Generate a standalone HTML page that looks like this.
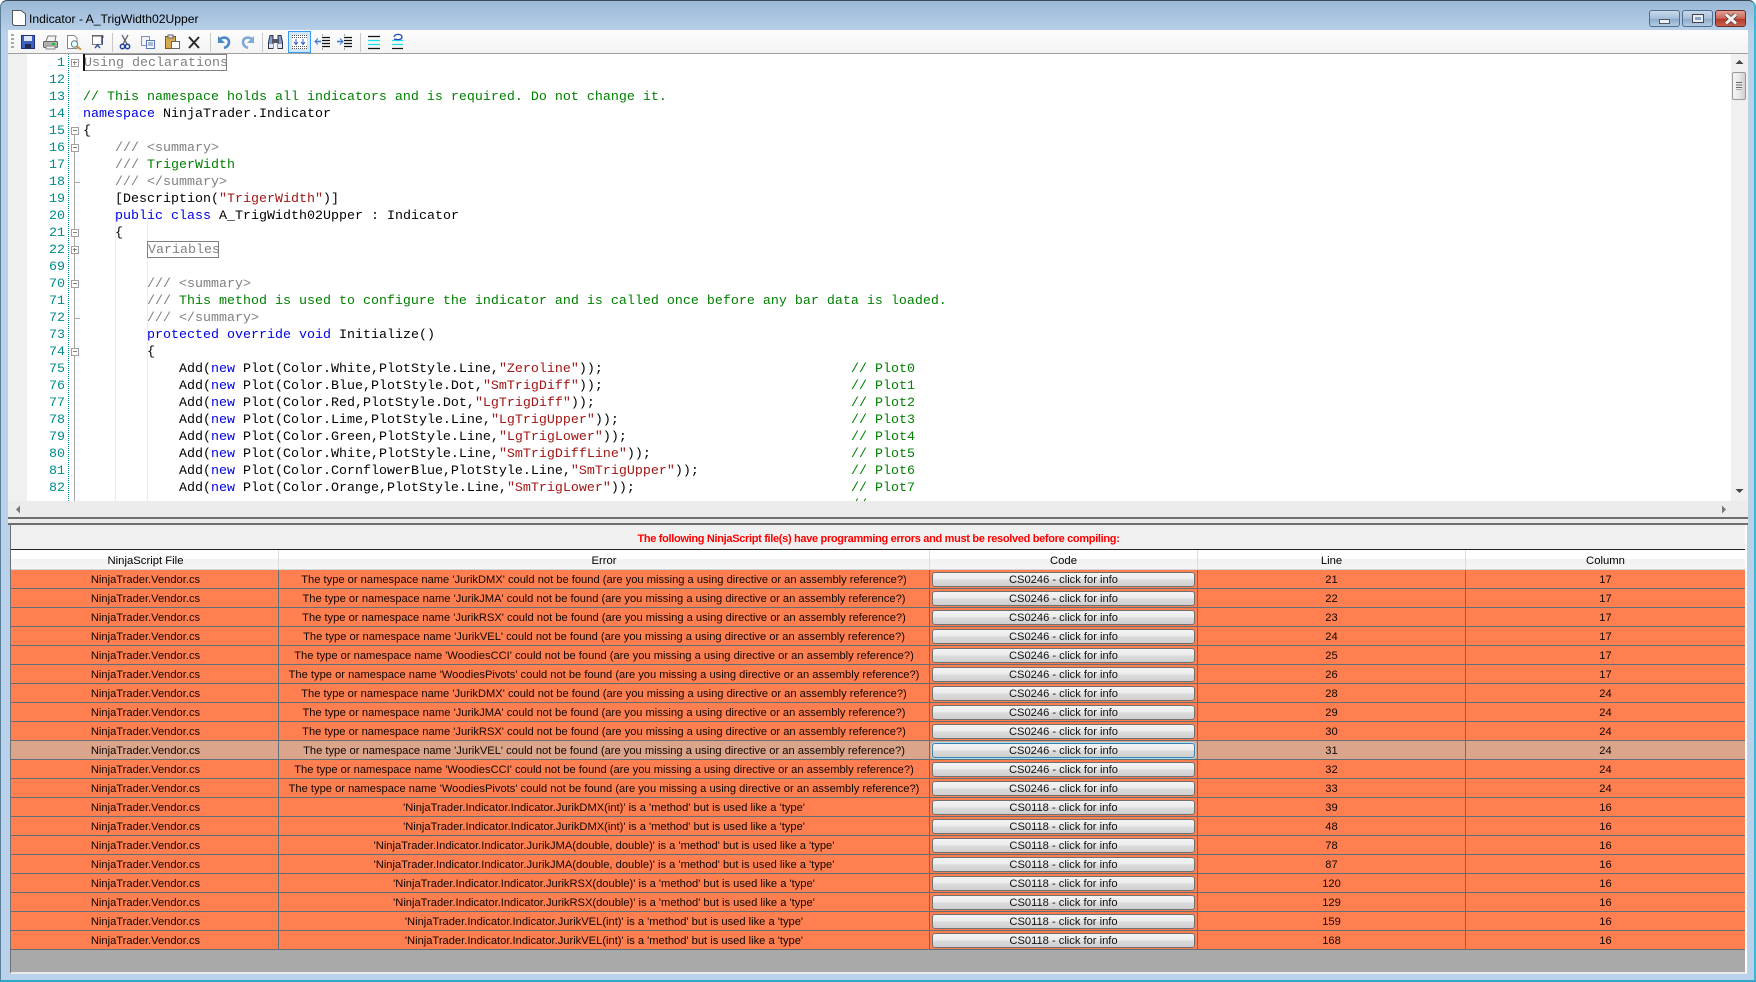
<!DOCTYPE html>
<html><head><meta charset="utf-8"><title>Indicator - A_TrigWidth02Upper</title>
<style>
html,body{margin:0;padding:0;width:1756px;height:982px;overflow:hidden;background:#fff}
*{box-sizing:border-box}
.a{position:absolute}
#win{position:absolute;left:0;top:0;width:1756px;height:982px;background:linear-gradient(#9ab8d6 0,#b9d1ea 32px,#b9d1ea 100%);border:1px solid #2f4a58;border-right:2px solid #3fb4d4;border-bottom:2px solid #2fa8c8;border-left-color:#5b7f98;border-top-color:#3a4a58;border-radius:7px 7px 0 0}
#title{position:absolute;left:29px;top:12px;font:12.15px/15px "Liberation Sans",sans-serif;color:#000}
#tb{position:absolute;left:8px;top:30px;width:1740px;height:24px;background:linear-gradient(#fdfdfd,#f3f3f3);border-bottom:1px solid #a0a0a0}
#code{position:absolute;left:8px;top:54px;width:1723px;height:447px;background:#fff;overflow:hidden}
#gut{position:absolute;left:0;top:0;width:19px;height:447px;background:#f0f0f0}
.l{position:absolute;left:75px;height:17px;margin-top:1px;white-space:pre;font:13.33px/17px "Liberation Mono",monospace;color:#000}
.n{position:absolute;left:20px;width:37px;text-align:right;height:17px;margin-top:1px;font:13.33px/17px "Liberation Mono",monospace;color:#008b8b}
.k{color:#0000e6}.c{color:#008000}.g{color:#808080}.s{color:#a31515}
.fb{position:absolute;left:63px;width:8px;height:8px;margin-top:1px;border:1px solid #a0a0a0;background:#fff}
.fb:before{content:"";position:absolute;left:1px;top:2px;width:4px;height:1px;background:#808080}
.p:after{content:"";position:absolute;left:2px;top:1px;width:1px;height:4px;background:#808080}
.box{position:absolute;border:1px solid #808080;height:17px;font:13.33px/15px "Liberation Mono",monospace;color:#808080;white-space:pre;padding:1px 0 0 0;overflow:hidden}
#vs{position:absolute;left:1731px;top:54px;width:17px;height:447px;background:#f0f0f0}
#hs{position:absolute;left:8px;top:501px;width:1740px;height:17px;background:#ececec}
#sp{position:absolute;left:8px;top:517px;width:1740px;height:8px;background:#ececec;border-top:2px solid #6e6e6e;border-bottom:2px solid #6e6e6e}
#pan{position:absolute;left:10px;top:525px;width:1737px;height:449px;background:#f0f0f0;border-left:1px solid #707070;border-right:2px solid #fff;border-bottom:2px solid #e8e8e8}
#msg{position:absolute;left:0;width:1735px;text-align:center;top:5px;font:bold 11px/15px "Liberation Sans",sans-serif;color:#f00;letter-spacing:-.32px;margin-top:2px}
#grid{position:absolute;left:11px;top:549px;width:1734px;height:423px;background:#a9a9a9;border-top:1px solid #222}
.h{position:absolute;top:0;height:20px;background:linear-gradient(#fff 0,#fff 45%,#f0f1f2 50%,#f5f5f5 100%);border-right:1px solid #dcdcdc;border-bottom:1px solid #d5d5d5;text-align:center;font:11.3px/22px "Liberation Sans",sans-serif;color:#000}
.r{position:absolute;left:0;width:1734px;height:19px;background:#ff7f50;border-bottom:1px solid #607078;font:11.15px/21px "Liberation Sans",sans-serif;color:#120600}
.r.sel{background:#dba58c}
.r i{position:absolute;top:0;font-style:normal;text-align:center;white-space:nowrap;border-right:1px solid #607078;height:19px}
.r i.f{left:0;width:268px;padding-left:2px}
.r i.e{left:268px;width:651px}
.r i.b{left:919px;width:268px}
.r i.ln{left:1187px;width:268px}
.r i.co{left:1455px;width:279px;border:0}
.r u{position:absolute;left:2px;top:2px;width:263px;height:15px;text-decoration:none;border:1px solid #707070;border-radius:3px;background:linear-gradient(#f4f4f4,#ebebeb 48%,#dcdcdc 52%,#cfcfcf);line-height:15px;color:#111}
.r.sel u{border-color:#3c7fb1;box-shadow:0 0 0 1px #a8e0f0}
.sep{position:absolute;top:33px;width:1px;height:19px;background:#c8c8c8}
.wb{position:absolute;top:10px;height:17px;border:1px solid #4f6d8c;border-radius:3px}
</style></head><body>
<div id="win"></div>
<svg class="a" style="left:11px;top:9px" width="16" height="18" viewBox="0 0 16 18"><path d="M1.5 1.5H10L14.5 5V16.5H3L1.5 15Z" fill="#fff" stroke="#555"/></svg>
<div id="title">Indicator - A_TrigWidth02Upper</div>
<div class="wb" style="left:1649px;width:31px;background:linear-gradient(#c9d9ea,#a6bfd9 50%,#8eaccc 55%,#b4cbe3)"><div class="a" style="left:9px;top:8px;width:11px;height:5px;background:#eef2f6;border:1px solid #4a5a6a"></div></div>
<div class="wb" style="left:1682px;width:31px;background:linear-gradient(#c9d9ea,#a6bfd9 50%,#8eaccc 55%,#b4cbe3)"><div class="a" style="left:9px;top:3px;width:12px;height:9px;background:#e8eef4;border:1px solid #445"><div class="a" style="left:2px;top:2px;width:6px;height:3px;background:#8aa4c0"></div></div></div>
<div class="wb" style="left:1715px;width:31px;border-color:#6b2b2b;background:linear-gradient(#e0a094,#cc6a5a 48%,#b83a2a 55%,#c8604c)"><svg class="a" style="left:8px;top:2px" width="14" height="12" viewBox="0 0 14 12"><path d="M2 1.5L12 10.5M12 1.5L2 10.5" stroke="#4a3a3a" stroke-width="4.4"/><path d="M2 1.5L12 10.5M12 1.5L2 10.5" stroke="#f4f0f0" stroke-width="3"/></svg></div>

<div id="tb"></div>
<div class="a" style="left:11px;top:34px;width:3px;height:16px;background:repeating-linear-gradient(#a8a8a8 0,#a8a8a8 2px,#f8f8f8 2px,#f8f8f8 4px)"></div>
<svg class="a" style="left:0;top:30px" width="420" height="24" viewBox="0 30 420 24" fill="none">
<!-- save -->
<rect x="21.5" y="35.5" width="13" height="13" fill="#4060c0" stroke="#20307a"/><rect x="24" y="36" width="8" height="5" fill="#dfe6f8"/><rect x="25" y="44" width="6" height="4" fill="#202a50"/>
<!-- print -->
<path d="M46 41L48 36H56L55 41" fill="#f4f4f4" stroke="#777"/><rect x="43.5" y="41.5" width="14" height="6" rx="1" fill="#b0b0b0" stroke="#666"/><rect x="46" y="46" width="9" height="3" fill="#eee" stroke="#888"/><rect x="52" y="43" width="3" height="2" fill="#22bb33"/>
<!-- preview -->
<path d="M67.5 35.5H74L77 38V48.5H67.5Z" fill="#fff" stroke="#888"/><circle cx="74.5" cy="44" r="3.2" fill="#dff" stroke="#777"/><path d="M77 46.5L81 49.5" stroke="#d09030" stroke-width="2"/>
<!-- presentation -->
<rect x="92.5" y="35.5" width="10" height="9" fill="#fff" stroke="#777"/><path d="M92 36H103V38" stroke="#555"/><path d="M95 48L97.5 45L100 48" stroke="#3050a0" stroke-width="1.4"/><path d="M102 36V44" stroke="#2a3a90" stroke-width="1.4"/>
<!-- cut -->
<path d="M122 35L127 44M128 35L123 44" stroke="#667" stroke-width="1.3"/><circle cx="122.5" cy="46.5" r="2.2" stroke="#2040a0" stroke-width="1.5"/><circle cx="127.5" cy="46.5" r="2.2" stroke="#2040a0" stroke-width="1.5"/>
<!-- copy -->
<rect x="141.5" y="36.5" width="8" height="9" fill="#eef3fb" stroke="#7a94bc"/><rect x="146.5" y="40.5" width="8" height="8" fill="#f4f8ff" stroke="#5a78b0"/><path d="M148 43H153M148 45H153" stroke="#5a78b0"/>
<!-- paste -->
<rect x="165.5" y="36.5" width="10" height="12" fill="#d8aa50" stroke="#7a5a20"/><rect x="168" y="35" width="5" height="3" fill="#e8e8e8" stroke="#666"/><rect x="171.5" y="41.5" width="8" height="7" fill="#fff" stroke="#666"/>
<!-- delete -->
<path d="M189 37L199 48M199 37L189 48" stroke="#2a2a2a" stroke-width="2"/>
<!-- undo -->
<path d="M220 39C224 36 229 38 229 42C229 45 227 47 224 48" stroke="#4a88cc" stroke-width="2.6"/><path d="M218 36V43H225Z" fill="#4a88cc"/>
<!-- redo -->
<path d="M252 39C248 36 243 38 243 42C243 45 245 47 248 48" stroke="#80a8d8" stroke-width="2.6"/><path d="M254 36V43H247Z" fill="#80a8d8"/>
<!-- find -->
<path d="M268.5 48.5V42L270 35.5H273V48.5ZM282.5 48.5V42L281 35.5H278V48.5Z" fill="#7f9fd0" stroke="#334"/><rect x="272" y="39" width="7" height="4" fill="#556"/><rect x="269" y="44" width="4" height="4" fill="#dfe8f8"/><rect x="278" y="44" width="4" height="4" fill="#dfe8f8"/>
<!-- active -->
<rect x="288.5" y="31.5" width="22" height="21" fill="#cfe6fb" stroke="#3a9af0"/><rect x="292" y="35" width="15" height="14" fill="#fff"/><path d="M292 35.5H307M292 37.5H307M292 46.5H307M292 48.5H307" stroke="#555" stroke-dasharray="1 1"/><path d="M296 39V44M294 42L296 44.5L298 42M303 39V44M301 42L303 44.5L305 42" stroke="#2a58c0"/>
<!-- outdent -->
<path d="M322 37.5H330M322 40.5H330M322 43.5H330M322 46.5H330" stroke="#111" stroke-width="1.2"/><path d="M322 35H323M322 49H323" stroke="#555"/><path d="M315 41.5H321" stroke="#3878d8" stroke-width="1.6"/><path d="M318 38.5L315 41.5L318 44.5" stroke="#3878d8"/>
<!-- indent -->
<path d="M344 37.5H352M344 40.5H352M344 43.5H352M344 46.5H352" stroke="#111" stroke-width="1.2"/><path d="M344 35H345M344 49H345" stroke="#555"/><path d="M337 41.5H343" stroke="#3878d8" stroke-width="1.6"/><path d="M340 38.5L343 41.5L340 44.5" stroke="#3878d8"/>
<!-- lines -->
<path d="M368 36.5H380M368 48.5H380" stroke="#111" stroke-width="1.2"/><path d="M368 40.5H380M368 44.5H380" stroke="#20e0e8" stroke-width="1.2"/>
<path d="M392 48.5H403" stroke="#111" stroke-width="1.2"/><path d="M392 44.5H403M392 40.5H403" stroke="#20e0e8" stroke-width="1.2"/><path d="M394 37C395 33.5 402 33.5 402 37C402 40 397 40 394 39" stroke="#2040c0" stroke-width="1.3"/>
</svg>
<div class="sep" style="left:112px"></div><div class="sep" style="left:210px"></div><div class="sep" style="left:262px"></div><div class="sep" style="left:360px"></div>

<div id="code">
<div id="gut"></div>
<div class="a" style="left:60px;top:0;height:447px;border-left:1px dotted #008b8b"></div>
<div class="a" style="left:66px;top:80px;height:367px;width:1px;background:#a8a8a8"></div>
<div class="a" style="left:107px;top:160px;height:287px;width:1px;background:#ececec"></div>
<div class="a" style="left:139px;top:160px;height:287px;width:1px;background:#ececec"></div>

<div class="n" style="top:0">1</div><div class="fb p" style="top:4px"></div>
<div class="box" style="left:75px;top:0;width:144px">Using declarations</div>
<div class="a" style="left:75px;top:0;width:2px;height:17px;background:#111"></div>
<div class="n" style="top:17px">12</div>
<div class="n" style="top:34px">13</div><div class="l c" style="top:34px">// This namespace holds all indicators and is required. Do not change it.</div>
<div class="n" style="top:51px">14</div><div class="l" style="top:51px"><span class="k">namespace</span> NinjaTrader.Indicator</div>
<div class="n" style="top:68px">15</div><div class="fb" style="top:72px"></div><div class="l" style="top:68px">{</div>
<div class="n" style="top:85px">16</div><div class="fb" style="top:89px"></div><div class="l g" style="top:85px">    /// &lt;summary&gt;</div>
<div class="n" style="top:102px">17</div><div class="l" style="top:102px"><span class="g">    /// </span><span class="c">TrigerWidth</span></div>
<div class="n" style="top:119px">18</div><div class="a" style="left:66px;top:128px;width:6px;height:1px;background:#a8a8a8"></div><div class="l g" style="top:119px">    /// &lt;/summary&gt;</div>
<div class="n" style="top:136px">19</div><div class="l" style="top:136px">    [Description(<span class="s">"TrigerWidth"</span>)]</div>
<div class="n" style="top:153px">20</div><div class="l" style="top:153px">    <span class="k">public</span> <span class="k">class</span> A_TrigWidth02Upper : Indicator</div>
<div class="n" style="top:170px">21</div><div class="fb" style="top:174px"></div><div class="l" style="top:170px">    {</div>
<div class="n" style="top:187px">22</div><div class="fb p" style="top:191px"></div>
<div class="box" style="left:139px;top:187px;width:72px">Variables</div>
<div class="n" style="top:204px">69</div>
<div class="n" style="top:221px">70</div><div class="fb" style="top:225px"></div><div class="l g" style="top:221px">        /// &lt;summary&gt;</div>
<div class="n" style="top:238px">71</div><div class="l" style="top:238px"><span class="g">        /// </span><span class="c">This method is used to configure the indicator and is called once before any bar data is loaded.</span></div>
<div class="n" style="top:255px">72</div><div class="a" style="left:66px;top:264px;width:6px;height:1px;background:#a8a8a8"></div><div class="l g" style="top:255px">        /// &lt;/summary&gt;</div>
<div class="n" style="top:272px">73</div><div class="l" style="top:272px">        <span class="k">protected</span> <span class="k">override</span> <span class="k">void</span> Initialize()</div>
<div class="n" style="top:289px">74</div><div class="fb" style="top:293px"></div><div class="l" style="top:289px">        {</div>
<div class="n" style="top:306px">75</div><div class="l" style="top:306px">            Add(<span class="k">new</span> Plot(Color.White,PlotStyle.Line,<span class="s">"Zeroline"</span>));</div><div class="l c" style="left:843px;top:306px">// Plot0</div>
<div class="n" style="top:323px">76</div><div class="l" style="top:323px">            Add(<span class="k">new</span> Plot(Color.Blue,PlotStyle.Dot,<span class="s">"SmTrigDiff"</span>));</div><div class="l c" style="left:843px;top:323px">// Plot1</div>
<div class="n" style="top:340px">77</div><div class="l" style="top:340px">            Add(<span class="k">new</span> Plot(Color.Red,PlotStyle.Dot,<span class="s">"LgTrigDiff"</span>));</div><div class="l c" style="left:843px;top:340px">// Plot2</div>
<div class="n" style="top:357px">78</div><div class="l" style="top:357px">            Add(<span class="k">new</span> Plot(Color.Lime,PlotStyle.Line,<span class="s">"LgTrigUpper"</span>));</div><div class="l c" style="left:843px;top:357px">// Plot3</div>
<div class="n" style="top:374px">79</div><div class="l" style="top:374px">            Add(<span class="k">new</span> Plot(Color.Green,PlotStyle.Line,<span class="s">"LgTrigLower"</span>));</div><div class="l c" style="left:843px;top:374px">// Plot4</div>
<div class="n" style="top:391px">80</div><div class="l" style="top:391px">            Add(<span class="k">new</span> Plot(Color.White,PlotStyle.Line,<span class="s">"SmTrigDiffLine"</span>));</div><div class="l c" style="left:843px;top:391px">// Plot5</div>
<div class="n" style="top:408px">81</div><div class="l" style="top:408px">            Add(<span class="k">new</span> Plot(Color.CornflowerBlue,PlotStyle.Line,<span class="s">"SmTrigUpper"</span>));</div><div class="l c" style="left:843px;top:408px">// Plot6</div>
<div class="n" style="top:425px">82</div><div class="l" style="top:425px">            Add(<span class="k">new</span> Plot(Color.Orange,PlotStyle.Line,<span class="s">"SmTrigLower"</span>));</div><div class="l c" style="left:843px;top:425px">// Plot7</div>
<div class="l c" style="left:843px;top:442px">//</div>
</div>

<div id="vs">
<svg class="a" style="left:3px;top:5px" width="11" height="6"><path d="M1.5 5L5.5 1L9.5 5Z" fill="#444"/></svg>
<div class="a" style="left:1px;top:18px;width:14px;height:28px;border:1px solid #9a9a9a;border-radius:2px;background:linear-gradient(90deg,#f4f4f4,#e8e8e8 50%,#cfcfcf)"><div class="a" style="left:3px;top:9px;width:6px;height:8px;background:repeating-linear-gradient(#666 0,#666 1px,#eee 1px,#eee 2.5px)"></div></div>
<svg class="a" style="left:3px;top:434px" width="11" height="6"><path d="M1.5 1L5.5 5L9.5 1Z" fill="#444"/></svg>
</div>
<div id="hs">
<svg class="a" style="left:7px;top:4px" width="6" height="9"><path d="M5 0.5L1 4.5L5 8.5Z" fill="#777"/></svg>
<svg class="a" style="left:1713px;top:4px" width="6" height="9"><path d="M1 0.5L5 4.5L1 8.5Z" fill="#777"/></svg>
</div>
<div id="sp"></div>
<div id="pan"><div id="msg">The following NinjaScript file(s) have programming errors and must be resolved before compiling:</div></div>

<div id="grid">
<div class="h" style="left:0;width:268px;padding-left:2px">NinjaScript File</div>
<div class="h" style="left:268px;width:651px">Error</div>
<div class="h" style="left:919px;width:268px">Code</div>
<div class="h" style="left:1187px;width:268px">Line</div>
<div class="h" style="left:1455px;width:279px;border-right:0">Column</div>

<div class="r" style="top:20px"><i class="f">NinjaTrader.Vendor.cs</i><i class="e">The type or namespace name 'JurikDMX' could not be found (are you missing a using directive or an assembly reference?)</i><i class="b"><u>CS0246 - click for info</u></i><i class="ln">21</i><i class="co">17</i></div>
<div class="r" style="top:39px"><i class="f">NinjaTrader.Vendor.cs</i><i class="e">The type or namespace name 'JurikJMA' could not be found (are you missing a using directive or an assembly reference?)</i><i class="b"><u>CS0246 - click for info</u></i><i class="ln">22</i><i class="co">17</i></div>
<div class="r" style="top:58px"><i class="f">NinjaTrader.Vendor.cs</i><i class="e">The type or namespace name 'JurikRSX' could not be found (are you missing a using directive or an assembly reference?)</i><i class="b"><u>CS0246 - click for info</u></i><i class="ln">23</i><i class="co">17</i></div>
<div class="r" style="top:77px"><i class="f">NinjaTrader.Vendor.cs</i><i class="e">The type or namespace name 'JurikVEL' could not be found (are you missing a using directive or an assembly reference?)</i><i class="b"><u>CS0246 - click for info</u></i><i class="ln">24</i><i class="co">17</i></div>
<div class="r" style="top:96px"><i class="f">NinjaTrader.Vendor.cs</i><i class="e">The type or namespace name 'WoodiesCCI' could not be found (are you missing a using directive or an assembly reference?)</i><i class="b"><u>CS0246 - click for info</u></i><i class="ln">25</i><i class="co">17</i></div>
<div class="r" style="top:115px"><i class="f">NinjaTrader.Vendor.cs</i><i class="e">The type or namespace name 'WoodiesPivots' could not be found (are you missing a using directive or an assembly reference?)</i><i class="b"><u>CS0246 - click for info</u></i><i class="ln">26</i><i class="co">17</i></div>
<div class="r" style="top:134px"><i class="f">NinjaTrader.Vendor.cs</i><i class="e">The type or namespace name 'JurikDMX' could not be found (are you missing a using directive or an assembly reference?)</i><i class="b"><u>CS0246 - click for info</u></i><i class="ln">28</i><i class="co">24</i></div>
<div class="r" style="top:153px"><i class="f">NinjaTrader.Vendor.cs</i><i class="e">The type or namespace name 'JurikJMA' could not be found (are you missing a using directive or an assembly reference?)</i><i class="b"><u>CS0246 - click for info</u></i><i class="ln">29</i><i class="co">24</i></div>
<div class="r" style="top:172px"><i class="f">NinjaTrader.Vendor.cs</i><i class="e">The type or namespace name 'JurikRSX' could not be found (are you missing a using directive or an assembly reference?)</i><i class="b"><u>CS0246 - click for info</u></i><i class="ln">30</i><i class="co">24</i></div>
<div class="r sel" style="top:191px"><i class="f">NinjaTrader.Vendor.cs</i><i class="e">The type or namespace name 'JurikVEL' could not be found (are you missing a using directive or an assembly reference?)</i><i class="b"><u>CS0246 - click for info</u></i><i class="ln">31</i><i class="co">24</i></div>
<div class="r" style="top:210px"><i class="f">NinjaTrader.Vendor.cs</i><i class="e">The type or namespace name 'WoodiesCCI' could not be found (are you missing a using directive or an assembly reference?)</i><i class="b"><u>CS0246 - click for info</u></i><i class="ln">32</i><i class="co">24</i></div>
<div class="r" style="top:229px"><i class="f">NinjaTrader.Vendor.cs</i><i class="e">The type or namespace name 'WoodiesPivots' could not be found (are you missing a using directive or an assembly reference?)</i><i class="b"><u>CS0246 - click for info</u></i><i class="ln">33</i><i class="co">24</i></div>
<div class="r" style="top:248px"><i class="f">NinjaTrader.Vendor.cs</i><i class="e">'NinjaTrader.Indicator.Indicator.JurikDMX(int)' is a 'method' but is used like a 'type'</i><i class="b"><u>CS0118 - click for info</u></i><i class="ln">39</i><i class="co">16</i></div>
<div class="r" style="top:267px"><i class="f">NinjaTrader.Vendor.cs</i><i class="e">'NinjaTrader.Indicator.Indicator.JurikDMX(int)' is a 'method' but is used like a 'type'</i><i class="b"><u>CS0118 - click for info</u></i><i class="ln">48</i><i class="co">16</i></div>
<div class="r" style="top:286px"><i class="f">NinjaTrader.Vendor.cs</i><i class="e">'NinjaTrader.Indicator.Indicator.JurikJMA(double, double)' is a 'method' but is used like a 'type'</i><i class="b"><u>CS0118 - click for info</u></i><i class="ln">78</i><i class="co">16</i></div>
<div class="r" style="top:305px"><i class="f">NinjaTrader.Vendor.cs</i><i class="e">'NinjaTrader.Indicator.Indicator.JurikJMA(double, double)' is a 'method' but is used like a 'type'</i><i class="b"><u>CS0118 - click for info</u></i><i class="ln">87</i><i class="co">16</i></div>
<div class="r" style="top:324px"><i class="f">NinjaTrader.Vendor.cs</i><i class="e">'NinjaTrader.Indicator.Indicator.JurikRSX(double)' is a 'method' but is used like a 'type'</i><i class="b"><u>CS0118 - click for info</u></i><i class="ln">120</i><i class="co">16</i></div>
<div class="r" style="top:343px"><i class="f">NinjaTrader.Vendor.cs</i><i class="e">'NinjaTrader.Indicator.Indicator.JurikRSX(double)' is a 'method' but is used like a 'type'</i><i class="b"><u>CS0118 - click for info</u></i><i class="ln">129</i><i class="co">16</i></div>
<div class="r" style="top:362px"><i class="f">NinjaTrader.Vendor.cs</i><i class="e">'NinjaTrader.Indicator.Indicator.JurikVEL(int)' is a 'method' but is used like a 'type'</i><i class="b"><u>CS0118 - click for info</u></i><i class="ln">159</i><i class="co">16</i></div>
<div class="r" style="top:381px"><i class="f">NinjaTrader.Vendor.cs</i><i class="e">'NinjaTrader.Indicator.Indicator.JurikVEL(int)' is a 'method' but is used like a 'type'</i><i class="b"><u>CS0118 - click for info</u></i><i class="ln">168</i><i class="co">16</i></div>
</div>
</body></html>
